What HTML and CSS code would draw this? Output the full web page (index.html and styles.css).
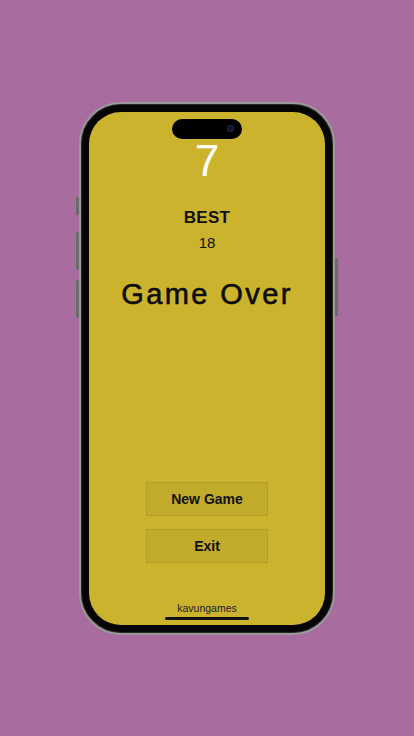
FILE: index.html
```html
<!DOCTYPE html>
<html lang="en">
<head>
    <meta charset="UTF-8">
    <meta name="viewport" content="width=device-width, initial-scale=1.0">
    <title>Game Over</title>
    <link rel="stylesheet" href="styles.css">
</head>
<body>
    <div class="phone">
        <span class="side-btn mute"></span>
        <span class="side-btn vol-up"></span>
        <span class="side-btn vol-down"></span>
        <span class="side-btn power"></span>

        <div class="screen">
            <div class="island"><span class="camera"></span></div>

            <div class="score">7</div>

            <div class="best">
                <span class="best-label">BEST</span>
                <span class="best-value">18</span>
            </div>

            <h1 class="title">Game Over</h1>

            <div class="actions">
                <button class="btn">New Game</button>
                <button class="btn">Exit</button>
            </div>

            <div class="footer">kavungames</div>
            <div class="home-bar"></div>
        </div>
    </div>
</body>
</html>
```

FILE: styles.css
```css
* {
    margin: 0;
    padding: 0;
    box-sizing: border-box;
}

body {
    font-family: "Liberation Sans", Arial, sans-serif;
    background-color: #a96c9f;
    height: 100vh;
    display: flex;
    align-items: center;
    justify-content: center;
}

.phone {
    position: relative;
    width: 256px;
    height: 533px;
    padding: 8px;
    background-color: #050505;
    border: 2px solid #9a9a9a;
    border-radius: 42px;
    box-shadow: inset 0 0 0 1px #2a2a2a;
}

/* hardware buttons on the frame edge */
.side-btn {
    position: absolute;
    width: 3px;
    background-color: #6b6b6b;
    border-radius: 1px;
}

.mute {
    left: -5px;
    top: 93px;
    height: 18px;
}

.vol-up {
    left: -5px;
    top: 128px;
    height: 38px;
}

.vol-down {
    left: -5px;
    top: 176px;
    height: 38px;
}

.power {
    right: -5px;
    top: 154px;
    height: 58px;
}

.screen {
    position: relative;
    height: 100%;
    background-color: #cbb32e;
    border-radius: 32px;
    display: flex;
    flex-direction: column;
    align-items: center;
    overflow: hidden;
}

.island {
    position: absolute;
    top: 7px;
    left: 50%;
    transform: translateX(-50%);
    width: 70px;
    height: 20px;
    background-color: #000;
    border-radius: 10px;
}

.camera {
    position: absolute;
    right: 8px;
    top: 6px;
    width: 7px;
    height: 7px;
    border-radius: 50%;
    background-color: #10142a;
    box-shadow: inset 0 0 0 1px #1d2550;
}

.score {
    margin-top: 24px;
    font-size: 44px;
    line-height: 50px;
    color: #fff;
}

.best {
    margin-top: 22px;
    display: flex;
    flex-direction: column;
    align-items: center;
    gap: 6px;
    color: #111;
}

.best-label {
    font-size: 17px;
    font-weight: bold;
    letter-spacing: 0.3px;
    line-height: 20px;
}

.best-value {
    font-size: 15px;
    line-height: 17px;
}

.title {
    margin-top: 26px;
    font-size: 29px;
    font-weight: normal;
    letter-spacing: 2.4px;
    line-height: 34px;
    color: #0d0d0d;
    -webkit-text-stroke: 0.6px #0d0d0d;
}

.actions {
    margin-top: auto;
    display: flex;
    flex-direction: column;
    gap: 13px;
}

.btn {
    width: 122px;
    height: 34px;
    background-color: #c2aa2b;
    border: 1px solid #b59e28;
    font-family: inherit;
    font-size: 14px;
    font-weight: bold;
    color: #111;
}

.footer {
    margin-top: 39px;
    font-size: 10.5px;
    line-height: 12px;
    color: #222;
}

.home-bar {
    margin-top: 3px;
    margin-bottom: 5px;
    width: 84px;
    height: 3px;
    border-radius: 2px;
    background-color: #111;
}
```
